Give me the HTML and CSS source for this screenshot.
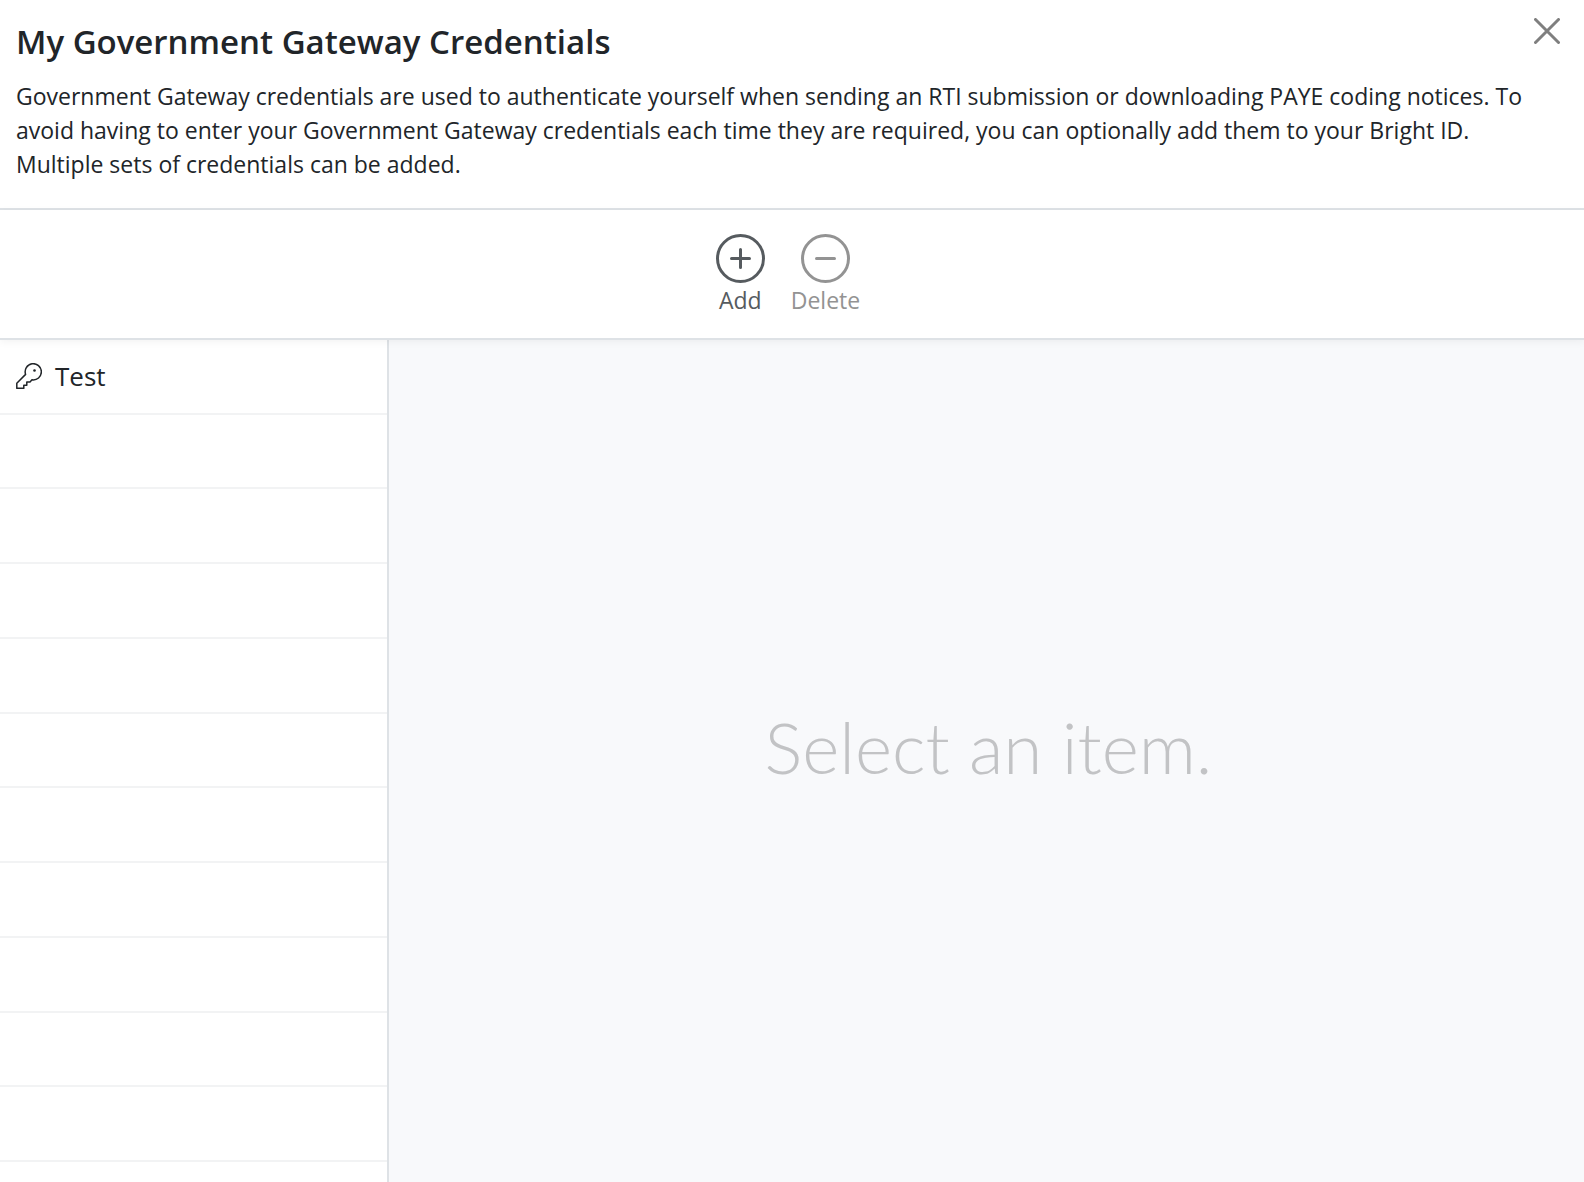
FILE: index.html
```html
<!DOCTYPE html>
<html lang="en">
<head>
<meta charset="utf-8">
<title>My Government Gateway Credentials</title>
<link rel="stylesheet" href="styles.css">
</head>
<body>
<header class="header">
  <div class="intro">
    <h1 class="title">My Government Gateway Credentials</h1>
    <p class="description">Government Gateway credentials are used to authenticate yourself when sending an RTI submission or downloading PAYE coding notices. To avoid having to enter your Government Gateway credentials each time they are required, you can optionally add them to your Bright ID. Multiple sets of credentials can be added.</p>
  </div>
  <button class="close" type="button" aria-label="Close">
    <svg class="close-icon" viewBox="0 0 26 26" aria-hidden="true"><path d="M1.5 1.5l23 23M24.5 1.5l-23 23"/></svg>
  </button>
</header>
<div class="toolbar" role="toolbar" aria-label="Credentials">
  <button class="tool" type="button">
    <svg class="tool-icon" viewBox="0 0 49 49" aria-hidden="true"><circle cx="24.5" cy="24.5" r="23"/><path d="M24.5 15.5v18M15.5 24.5h18"/></svg>
    <span>Add</span>
  </button>
  <button class="tool" type="button" disabled>
    <svg class="tool-icon" viewBox="0 0 49 49" aria-hidden="true"><circle cx="24.5" cy="24.5" r="23"/><path d="M15.5 24.5h18"/></svg>
    <span>Delete</span>
  </button>
</div>
<main class="content">
  <ul class="list">
    <li class="row"><a class="item" href="#test">
      <svg class="key-icon" viewBox="0 0 26 26" aria-hidden="true"><path d="M9.6 11.400L.8 20.300v5H7.800v-3h3v-3.200h3.200l2-2.300a8.100 8.100 0 1 0-6.400-5.400z"/><circle class="key-hole" cx="18.500" cy="7.500" r="1.300"/></svg>
      <span>Test</span></a></li>
    <li class="row"></li>
    <li class="row"></li>
    <li class="row"></li>
    <li class="row"></li>
    <li class="row"></li>
    <li class="row"></li>
    <li class="row"></li>
    <li class="row"></li>
    <li class="row"></li>
    <li class="row"></li>
  </ul>
  <section class="detail"><p class="placeholder">Select an item.</p></section>
</main>
</body>
</html>
```
FILE: styles.css
```css
* {
  box-sizing: border-box;
}

body {
  display: flex;
  flex-direction: column;
  min-height: 100vh;
  margin: 0;
  background: #fff;
  color: #212529;
  font-family: "Open Sans", "Noto Sans", sans-serif;
  font-size: 23px;
  line-height: 34px;
}

button {
  padding: 0;
  border: 0;
  background: none;
  color: inherit;
  font: inherit;
}

.header {
  display: flex;
  align-items: flex-start;
  justify-content: space-between;
  padding: 18px 24px 27px 16px;
  border-bottom: 2px solid #dee2e6;
}

.intro {
  flex: 1;
}

.title {
  margin: 0 0 13px;
  font-size: 33px;
  font-weight: 600;
  line-height: 48px;
}

.description {
  margin: 0;
}

.close {
  display: flex;
}

.close-icon {
  width: 26px;
  height: 26px;
  fill: none;
  stroke: #7f7f7f;
  stroke-width: 3;
  stroke-linecap: round;
}

.toolbar {
  display: flex;
  justify-content: center;
  gap: 26px;
  padding: 24px 8px 21px 0;
  border-bottom: 2px solid #dee2e6;
  box-shadow: 0 2px 8px rgba(0, 0, 0, 0.05);
  z-index: 1;
}

.tool {
  display: flex;
  flex-direction: column;
  align-items: center;
  color: #565b5f;
}

.tool:disabled {
  color: #939393;
}

.tool-icon {
  width: 49px;
  height: 49px;
  fill: none;
  stroke: currentColor;
  stroke-width: 3;
  stroke-linecap: round;
}

.content {
  display: flex;
  flex: 1;
}

.list {
  display: flex;
  flex-direction: column;
  width: 389px;
  margin: 0;
  padding: 0 0 20px;
  border-right: 2px solid #dee2e6;
  list-style: none;
}

.row {
  display: flex;
  flex: 1;
  min-height: 64px;
  border-bottom: 2px solid #f2f3f4;
}

.item {
  display: flex;
  flex: 1;
  align-items: center;
  gap: 13px;
  padding-left: 16px;
  color: inherit;
  font-size: 26px;
  text-decoration: none;
}

.key-icon {
  width: 26px;
  height: 26px;
  fill: none;
  stroke: currentColor;
  stroke-width: 1.5;
  stroke-linejoin: round;
}

.key-hole {
  fill: currentColor;
  stroke: none;
}

.detail {
  display: flex;
  flex: 1;
  align-items: center;
  justify-content: center;
  padding: 0 0 28px 4px;
  background: #f8f9fb;
}

.placeholder {
  margin: 0;
  color: #c2c3c5;
  font-family: Lato, sans-serif;
  font-size: 71px;
  font-weight: 300;
  line-height: 84px;
}
```
